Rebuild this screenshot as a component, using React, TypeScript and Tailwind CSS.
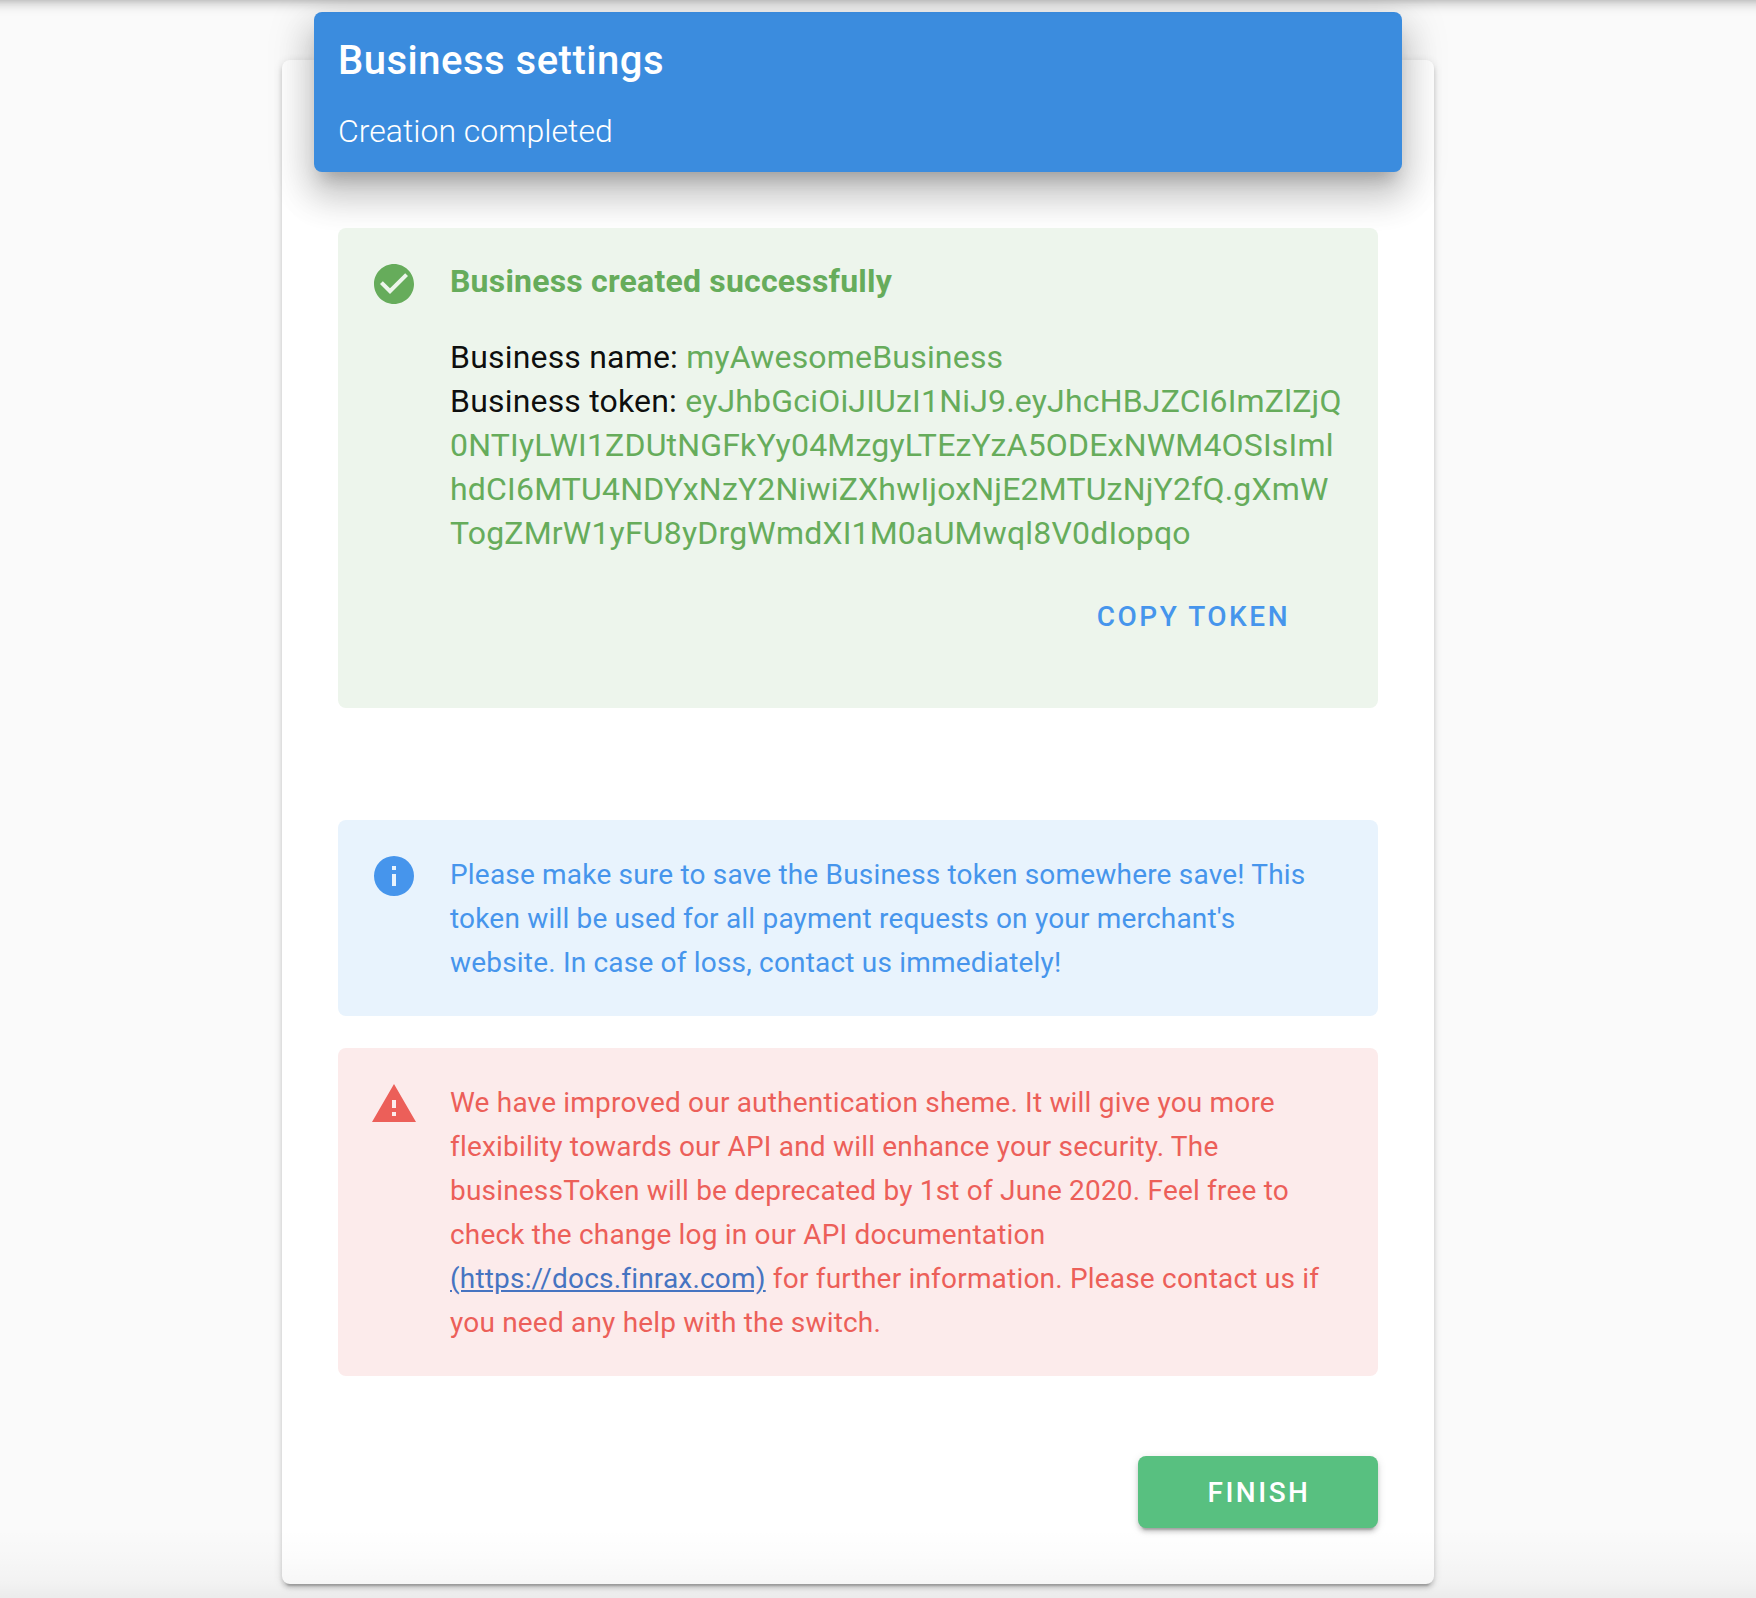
import type { ReactNode } from "react";

const ICONS = {
  success:
    "M12 2C6.5 2 2 6.5 2 12S6.5 22 12 22 22 17.5 22 12 17.5 2 12 2M10 17L5 12L6.41 10.59L10 14.17L17.59 6.58L19 8L10 17Z",
  info: "M13 9H11V7H13M13 17H11V11H13M12 2A10 10 0 0 0 2 12A10 10 0 0 0 12 22A10 10 0 0 0 22 12A10 10 0 0 0 12 2Z",
  error: "M13 14H11V10H13M13 18H11V16H13M1 21H23L12 2L1 21Z",
};

function Alert({
  icon,
  className,
  children,
}: {
  icon: keyof typeof ICONS;
  className: string;
  children: ReactNode;
}) {
  return (
    <div className={`flex gap-8 rounded-lg px-8 ${className}`}>
      <svg viewBox="0 0 24 24" className="mt-8 size-12 shrink-0" fill="currentColor">
        <path d={ICONS[icon]} />
      </svg>
      <div className="min-w-0 flex-1">{children}</div>
    </div>
  );
}

const TOKEN =
  "eyJhbGciOiJIUzI1NiJ9.eyJhcHBJZCI6ImZlZjQ0NTIyLWI1ZDUtNGFkYy04MzgyLTEzYzA5ODExNWM4OSIsImlhdCI6MTU4NDYxNzY2NiwiZXhwIjoxNjE2MTUzNjY2fQ.gXmWTogZMrW1yFU8yDrgWmdXI1M0aUMwql8V0dIopqo";

export default function App() {
  return (
    <div className="relative h-[1598px] w-[1756px] overflow-hidden bg-[#fafafa] pt-[60px] pl-[282px] font-['Roboto',sans-serif]">
      <main className="flex h-[1524px] w-[1152px] flex-col rounded-lg bg-white px-14 shadow-[0_6px_2px_-4px_rgba(0,0,0,0.2),0_4px_4px_0_rgba(0,0,0,0.14),0_2px_10px_0_rgba(0,0,0,0.12)]">
        <header className="-mx-6 -mt-12 h-40 shrink-0 rounded-lg bg-[#3b8cde] px-6 pt-[17px] text-white shadow-[0_14px_16px_-8px_rgba(0,0,0,0.2),0_24px_34px_4px_rgba(0,0,0,0.14),0_10px_44px_8px_rgba(0,0,0,0.12)]">
          <h1 className="text-[40px] leading-[64px] font-medium tracking-[0.5px]">Business settings</h1>
          <p className="mt-4 text-[32px] leading-[44px] font-light">Creation completed</p>
        </header>

        <Alert icon="success" className="z-0 mt-14 h-[480px] bg-[#edf5ec] text-[#66ac5b]">
          <h2 className="mt-[31px] text-[32px] leading-[44px] font-bold tracking-[0.2px]">
            Business created successfully
          </h2>
          <div className="mt-8 text-[32px] leading-[44px] tracking-[0.19px] break-all">
            <span className="text-black/95">Business name: </span>myAwesomeBusiness
            <br />
            <span className="text-black/95">Business token: </span>
            {TOKEN}
          </div>
          <div className="mt-[26px] flex justify-end pr-14">
            <button className="h-[72px] text-[28px] font-medium tracking-[2.5px] text-[#4695ec]">COPY TOKEN</button>
          </div>
        </Alert>

        <Alert icon="info" className="mt-28 h-[196px] bg-[#e8f3fd] text-[#4695ec]">
          <p className="mt-[33px] text-[28px] leading-[44px] tracking-[0.19px]">
            Please make sure to save the Business token somewhere save! This token will be used for all payment
            requests on your merchant's website. In case of loss, contact us immediately!
          </p>
        </Alert>

        <Alert icon="error" className="mt-8 h-[328px] bg-[#fcebeb] text-[#ec5f59]">
          <p className="mt-[33px] text-[28px] leading-[44px] tracking-[0.19px]">
            We have improved our authentication sheme. It will give you more flexibility towards our API and will
            enhance your security. The businessToken will be deprecated by 1st of June 2020. Feel free to check the
            change log in our API documentation{" "}
            <a href="#docs" className="text-[#4674c1] underline">
              (https://docs.finrax.com)
            </a>{" "}
            for further information. Please contact us if you need any help with the switch.
          </p>
        </Alert>

        <button className="mt-20 h-[72px] w-60 shrink-0 self-end rounded-lg bg-[#58c080] pt-0.5 pl-0.5 text-[28px] font-medium tracking-[2.5px] text-white shadow-[0_6px_2px_-4px_rgba(0,0,0,0.2),0_4px_4px_0_rgba(0,0,0,0.14),0_2px_10px_0_rgba(0,0,0,0.12)]">
          FINISH
        </button>
      </main>

      {/* Shadows of the app bar above and the footer below the visible area */}
      <div className="pointer-events-none absolute -inset-x-8 -top-11 h-10 shadow-[0_4px_8px_-2px_rgba(0,0,0,0.2),0_8px_10px_0_rgba(0,0,0,0.14),0_2px_20px_0_rgba(0,0,0,0.12)]" />
      <div className="pointer-events-none absolute bottom-0 left-0 h-[70px] w-full bg-[linear-gradient(to_bottom,rgba(0,0,0,0),rgba(0,0,0,0.01)_40%,rgba(0,0,0,0.03)_78%,rgba(0,0,0,0.06))]" />
    </div>
  );
}
